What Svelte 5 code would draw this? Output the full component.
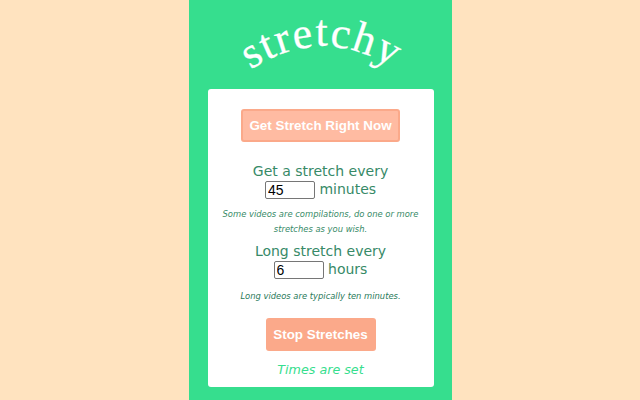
<script lang="ts">
	let minutes = $state(45);
	let hours = $state(6);
</script>

<main class="app">
	<svg class="logo" viewBox="0 0 263 89" width="263" height="89" aria-label="stretchy">
		<path id="logo-arc" d="M 50 78 Q 131 16 216 76" fill="none" />
		<text class="logo__text">
			<textPath href="#logo-arc" startOffset="50%" text-anchor="middle">stretchy</textPath>
		</text>
	</svg>

	<section class="card">
		<button class="btn btn--now">Get Stretch Right Now</button>

		<label class="field field--first">
			Get a stretch every<br />
			<input type="number" bind:value={minutes} /> minutes
		</label>
		<p class="note">Some videos are compilations, do one or more stretches as you wish.</p>

		<label class="field">
			Long stretch every<br />
			<input type="number" bind:value={hours} /> hours
		</label>
		<p class="note note--dark">Long videos are typically ten minutes.</p>

		<button class="btn btn--stop">Stop Stretches</button>
		<p class="status">Times are set</p>
	</section>
</main>

<style>
	:global(body) {
		background: #ffe3bf;
	}

	.app {
		box-sizing: border-box;
		width: 263px;
		height: 400px;
		margin: 0 auto;
		padding: 0 18px 0 19px;
		overflow: hidden;
		background: #36de8e;
		font-family: "DejaVu Sans", Verdana, sans-serif;
	}

	.logo {
		display: block;
		margin: 0 -18px 0 -19px;
	}

	.logo__text {
		fill: #fff;
		stroke: #fff;
		stroke-width: 0.3px;
		font-family: "Liberation Serif", serif;
		font-size: 44px;
		letter-spacing: 1.5px;
	}

	.card {
		display: flex;
		flex-direction: column;
		align-items: center;
		height: 298px;
		box-sizing: border-box;
		padding-top: 20px;
		border-radius: 3px;
		background: #fff;
		color: #378a67;
		text-align: center;
	}

	.btn {
		box-sizing: border-box;
		height: 33px;
		padding: 0 0 1px;
		border-radius: 3px;
		color: #fff;
		font: bold 13.4px "Liberation Sans", Arial, sans-serif;
	}

	.btn--now {
		width: 159px;
		border: 2px solid #fba98a;
		background: #ffbba2;
	}

	.btn--stop {
		width: 110px;
		margin-top: 14px;
		border: 0;
		background: #fba98a;
	}

	.field {
		display: block;
		font-size: 14px;
		line-height: 18px;
		margin-top: 5px;
	}

	.field--first {
		margin-top: 20px;
	}

	.field input {
		box-sizing: border-box;
		width: 50px;
		height: 18px;
		padding: 0 2px;
		border: 1px solid #767676;
		border-radius: 2px;
		color: #000;
		font: 14px "Liberation Sans", Arial, sans-serif;
		vertical-align: -1px;
		appearance: textfield;
	}

	.field input::-webkit-inner-spin-button {
		display: none;
	}

	.note {
		margin: 8px 0 0;
		padding: 0 8px;
		font-size: 8.4px;
		font-style: italic;
		line-height: 15px;
	}

	.note--dark {
		margin-top: 10px;
		color: #2a7a5a;
	}

	.status {
		margin: 11px 0 0;
		color: #36de8e;
		font-size: 12.7px;
		font-style: italic;
	}
</style>
